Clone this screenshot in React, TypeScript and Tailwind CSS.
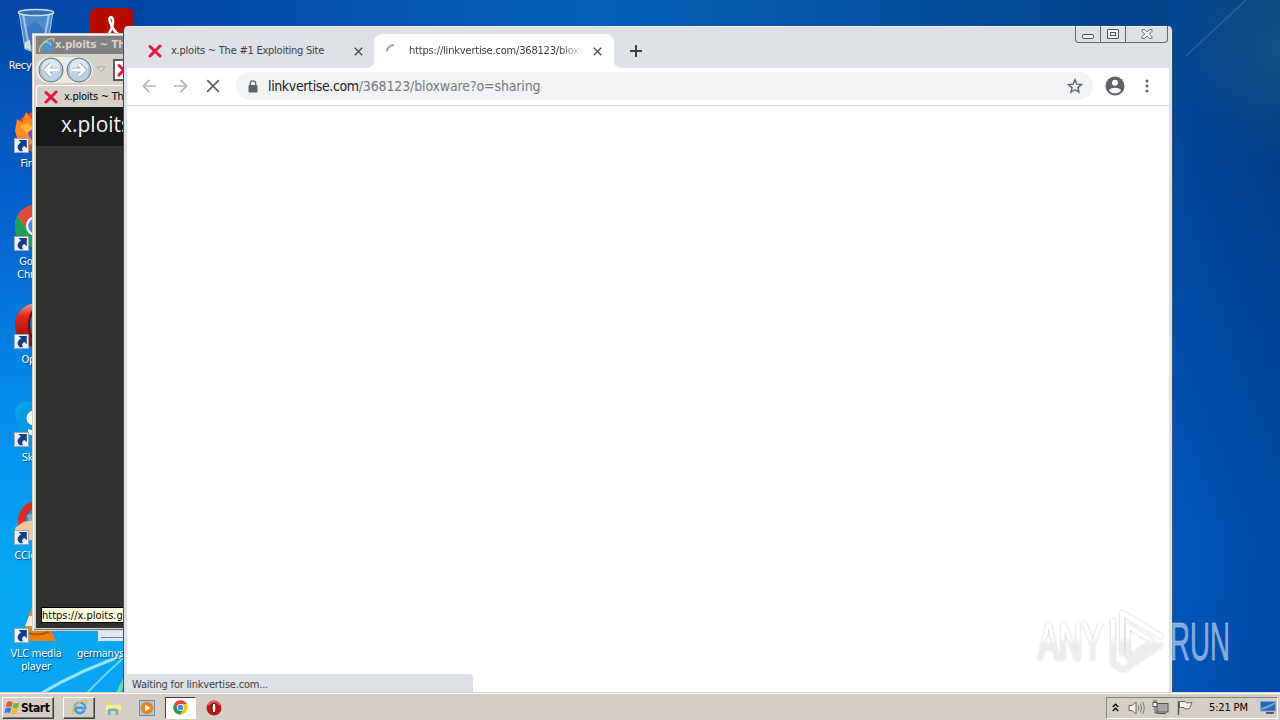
import type { ReactNode } from 'react';

const TAHOMA = "font-['DejaVu_Sans_Condensed','DejaVu_Sans',sans-serif] [font-stretch:condensed]";

function RedX({ size = 14 }: { size?: number }) {
  return (
    <svg width={size} height={size} viewBox="0 0 14 14" className="shrink-0">
      <path d="M2 2.5 L12 12 M12 2 L2 12" stroke="#e4173c" strokeWidth="3" strokeLinecap="round" />
    </svg>
  );
}

function ChromeLogo({ size }: { size: number }) {
  return (
    <svg width={size} height={size} viewBox="0 0 48 48" className="shrink-0">
      <circle cx="24" cy="24" r="23" fill="#f9c51d" />
      <path d="M4 12.5 A23 23 0 0 1 44 12.5 L24 13 L14.5 29.5 Z" fill="#dd4b3e" />
      <path d="M4 12.5 L14.5 29.5 L33.5 29.5 L23 47 A23 23 0 0 1 4 12.5 Z" fill="#1f9d58" />
      <circle cx="24" cy="24" r="11" fill="#fff" />
      <circle cx="24" cy="24" r="8.5" fill="#4587f3" />
    </svg>
  );
}

function IELogo({ size }: { size: number }) {
  return (
    <svg width={size} height={size} viewBox="0 0 20 20" className="shrink-0">
      <path d="M16 13 A6 6 0 1 1 16.5 10.5 L6 10.5" fill="none" stroke="#3d9be0" strokeWidth="3.2" />
      <path d="M15.5 10 A5.6 5.6 0 0 0 6 8" fill="none" stroke="#a5dcf7" strokeWidth="1.2" />
      <path d="M2.5 18 C-1 16 5 6 12 3 C17 .5 20 1.500 17.800 5.500" fill="none" stroke="#e6c14f" strokeWidth="1.7" />
    </svg>
  );
}

function ShortcutArrow() {
  return (
    <svg width="15" height="15" viewBox="0 0 15 15" className="absolute bottom-px left-[0.5px]">
      <rect x=".5" y=".5" width="14" height="14" fill="#e9f4fc" stroke="#9baab5" />
      <path d="M4.500 2 H12.800 V10.300 L10.400 8 C7.800 9 7.600 11 9 13.200 H6 C2 10 3.500 6.500 7 4.500 Z" fill="#153e86" />
    </svg>
  );
}

function DesktopIcon({ place, label, shortcut, children }: { place: string; label: ReactNode; shortcut?: boolean; children: ReactNode }) {
  return (
    <div className={`absolute flex w-[96px] flex-col items-center ${place}`}>
      <div className="relative h-12 w-[46px]">
        {children}
        {shortcut && <ShortcutArrow />}
      </div>
      <div className="mt-[3px] text-center text-[11px] leading-[13px] tracking-[-0.25px] text-white [text-shadow:1px_1px_1px_#003b7a]">{label}</div>
    </div>
  );
}

function Desktop() {
  return (
    <>
      <svg className="absolute inset-0" width="1280" height="720" viewBox="0 0 1280 720">
        <defs>
          <linearGradient id="left" x1="0" y1="0" x2="0" y2="1">
            <stop offset="0" stopColor="#0346a5" />
            <stop offset=".28" stopColor="#0560cc" />
            <stop offset=".55" stopColor="#058aea" />
            <stop offset=".8" stopColor="#06a8f5" />
            <stop offset="1" stopColor="#0ba4f2" />
          </linearGradient>
          <linearGradient id="right" x1="0" y1="0" x2="0" y2="1">
            <stop offset="0" stopColor="#07427f" />
            <stop offset=".22" stopColor="#02418c" />
            <stop offset=".5" stopColor="#004ba7" />
            <stop offset=".75" stopColor="#0055bb" />
            <stop offset="1" stopColor="#0052b5" />
          </linearGradient>
          <linearGradient id="shade" x1="0" y1="0" x2="1" y2="0">
            <stop offset="0" stopColor="#0058c4" stopOpacity=".3" />
            <stop offset="1" stopColor="#003678" stopOpacity=".3" />
          </linearGradient>
          <linearGradient id="top" x1="0" y1="0" x2="1" y2="0">
            <stop offset="0" stopColor="#0346a5" />
            <stop offset=".45" stopColor="#0560b8" />
            <stop offset="1" stopColor="#034288" />
          </linearGradient>
          <radialGradient id="corner" gradientUnits="userSpaceOnUse" cx="1285" cy="50" r="110">
            <stop offset="0" stopColor="#1a558a" stopOpacity=".8" />
            <stop offset="1" stopColor="#1a558a" stopOpacity="0" />
          </radialGradient>
        </defs>
        <rect width="130" height="720" fill="url(#left)" />
        <rect x="124" width="1050" height="40" fill="url(#top)" />
        <rect x="1168" width="112" height="720" fill="url(#right)" />
        <rect x="1168" width="112" height="720" fill="url(#shade)" />
        <rect x="1160" width="120" height="170" fill="url(#corner)" />
        <path d="M1186 56 L1246 0" stroke="#4f82b6" strokeOpacity=".4" strokeWidth="1.5" />
        <path d="M40 694 Q80 670 130 653" fill="none" stroke="#b9f4fb" strokeWidth="3" strokeOpacity=".8" />
        <path d="M86 694 Q105 674 130 652" fill="none" stroke="#7ce4f7" strokeWidth="2" strokeOpacity=".8" />
        <path d="M118 694 Q122 684 130 670" fill="none" stroke="#6be0ae" strokeWidth="4" />
      </svg>

      <DesktopIcon place="left-[-12px] top-[8px]" label="Recycle Bin">
        <svg width="46" height="48" viewBox="0 0 46 48">
          <path d="M6 4 L12 41 Q23 46 34 41 L40 4 Z" fill="#6aa3d8" fillOpacity=".75" stroke="#a9cbea" />
          <path d="M13 20 L22 13 L31 21 L34 37 L15 37 Z" fill="#2e71bb" fillOpacity=".7" />
          <path d="M10 6 L16 39 M36 6 L30 39" stroke="#d3e5f5" strokeOpacity=".65" strokeWidth="2" />
          <path d="M12 34 L17 32 L18 42 L12 40 Z" fill="#ddd" />
          <ellipse cx="23" cy="4.500" rx="17.500" ry="3" fill="#336fb3" stroke="#cbdeed" strokeWidth="1.500" />
        </svg>
      </DesktopIcon>
      <DesktopIcon place="left-[64px] top-[8px]" label="Acrobat">
        <svg width="46" height="48" viewBox="0 0 46 48">
          <rect x="1" width="44" height="44" rx="7" fill="#b60c00" />
          <path d="M12 36 C19 29 25 18 24 12 C23 7 19 9 21 14 C24 23 30 29 36 28 C30 24 17 28 12 36" fill="none" stroke="#fff" strokeWidth="2.500" />
        </svg>
      </DesktopIcon>
      <DesktopIcon place="left-[-12px] top-[106px]" label="Firefox" shortcut>
        <svg width="46" height="48" viewBox="0 0 46 48">
          <circle cx="23" cy="26" r="20" fill="#f4452f" />
          <path d="M2 25 L4 13 L9 17 L13 6 L19 14 L31 12 C23 17 34 32 22 38 C14 37 8 45 2 25" fill="#ff8a24" />
          <circle cx="25" cy="26" r="10" fill="#7648c4" />
          <path d="M7 20 Q16 14 21 22 L14 27" fill="#ffb52e" />
        </svg>
      </DesktopIcon>
      <DesktopIcon place="left-[-12px] top-[204px]" label={<>Google<br />Chrome</>} shortcut>
        <div className="pl-px"><ChromeLogo size={44} /></div>
      </DesktopIcon>
      <DesktopIcon place="left-[-12px] top-[302px]" label="Opera" shortcut>
        <svg width="46" height="48" viewBox="0 0 46 48">
          <defs>
            <linearGradient id="opera" x1="0" y1="0" x2="0" y2="1">
              <stop offset="0" stopColor="#f19a94" />
              <stop offset=".3" stopColor="#e2281e" />
              <stop offset="1" stopColor="#8c0709" />
            </linearGradient>
          </defs>
          <ellipse cx="24" cy="23" rx="22" ry="22" fill="url(#opera)" />
          <ellipse cx="25" cy="23" rx="9" ry="17" fill="#0f84d6" stroke="#780406" strokeWidth="2" />
        </svg>
      </DesktopIcon>
      <DesktopIcon place="left-[-12px] top-[400px]" label="Skype" shortcut>
        <svg width="46" height="48" viewBox="0 0 46 48">
          <circle cx="14" cy="13" r="12" fill="#05a2e6" />
          <circle cx="24" cy="23" r="20" fill="#0799df" />
          <circle cx="21" cy="18" r="7.500" fill="#fff" />
          <path d="M15 29 Q21 32 27 28 L27 35 Q18 37 15 33 Z" fill="#fff" />
        </svg>
      </DesktopIcon>
      <DesktopIcon place="left-[-12px] top-[498px]" label="CCleaner" shortcut>
        <svg width="46" height="48" viewBox="0 0 46 48">
          <path d="M35 10 A16 16 0 1 0 35 35" fill="none" stroke="#d72e24" strokeWidth="8" />
          <path d="M2 30 L10 24 L21 22 L32 40 L5 44 Z" fill="#f4c69b" />
          <path d="M14 17 L24 15 L24 23 L16 23 Z" fill="#8ba8bd" />
        </svg>
      </DesktopIcon>
      <DesktopIcon place="left-[-12px] top-[596px]" label={<>VLC media<br />player</>} shortcut>
        <svg width="46" height="48" viewBox="0 0 46 48">
          <path d="M22 2 L27 2 L36 37 H10 Z" fill="#f78b17" />
          <path d="M16 20 L32 20 L35 30 L12 30 Z" fill="#f2eee8" />
          <path d="M8 34 H38 L43 45 H3 Z" fill="#ee8012" />
          <path d="M12 36 Q23 41 36 36" fill="none" stroke="#b65608" strokeWidth="2" />
        </svg>
      </DesktopIcon>
      <DesktopIcon place="left-[64px] top-[596px]" label="germanyseries">
        <div className="ml-[9px] h-[45px] w-7 bg-linear-to-b from-white to-[#dbe6fa]" />
        <div className="absolute bottom-[6px] left-[12px] h-px w-6 bg-[#6b85c2]" />
      </DesktopIcon>
    </>
  );
}

function NavButton({ flip }: { flip?: boolean }) {
  return (
    <svg width="28" height="26" viewBox="0 0 28 26" className={flip ? 'shrink-0 -scale-x-100' : 'shrink-0'}>
      <circle cx="14" cy="13" r="12" fill="#a9bfd0" stroke="#697784" />
      <circle cx="14" cy="11.500" r="9.500" fill="#dbe7f0" />
      <path d="M4 14 Q14 19 24 14 Q22 24 14 24 Q6 24 4 14" fill="#bcd2e2" />
      <path d="M21 13 H9 M14 7.500 L8.500 13 L14 18.500" fill="none" stroke="#8da8bb" strokeWidth="4.600" />
      <path d="M21 13 H9 M14 7.500 L8.500 13 L14 18.500" fill="none" stroke="#fff" strokeWidth="3" />
    </svg>
  );
}

// Only the strip left of the Chrome window is visible, so it is kept that narrow.
function ExplorerWindow() {
  return (
    <div className="absolute left-[32px] top-[33px] flex h-[598px] w-[92px] flex-col overflow-hidden border border-r-0 border-[#d4d0c8] bg-[#d5d0c9] pb-[2px] pl-[3px] pt-[2px] shadow-[inset_1px_1px_0_#fff,inset_0_-1px_0_#777]">
      <div className="flex h-[18px] shrink-0 items-center bg-[#828282] pl-[2px] text-[#d8d4ce]">
        <IELogo size={17} />
        <span className="whitespace-nowrap text-[11px] font-bold">x.ploits ~ The</span>
      </div>
      <div className="flex h-[31px] shrink-0 items-center">
        <div className="flex shrink-0 rounded-full bg-[#eceae5] pl-px">
          <NavButton />
          <NavButton flip />
        </div>
        <svg width="10" height="7" viewBox="0 0 10 7" className="ml-[3px] shrink-0"><path d="M1 1 H9 L5 5.500 Z" fill="#e8e6e2" stroke="#a6a19b" /></svg>
        <div className="ml-[7px] flex h-[22px] w-[60px] shrink-0 items-center border-2 border-[#5f5d59] bg-white pl-[2px]"><RedX /></div>
      </div>
      <div className="flex h-[22px] shrink-0 items-center rounded-tl-[3px] border-l border-t border-white pl-[7px] text-[11px] text-black">
        <RedX />
        <span className="ml-[6px] whitespace-nowrap pt-px tracking-[-0.25px]">x.ploits ~ The</span>
      </div>
      <div className="flex h-[39px] shrink-0 items-center bg-[#171918] pl-[25px] font-['Open_Sans',sans-serif] text-[21px] leading-none text-[#f2f2f2] [font-stretch:normal]">
        <span className="pb-[4px]">x.ploits</span>
      </div>
      <div className="flex grow items-end bg-[#313131] pb-[5px] pl-[5px]">
        <div className="h-[16px] w-full border border-r-0 border-black bg-[#ffffe1] text-[11px] leading-[15px] text-black">https://x.ploits.gg</div>
      </div>
    </div>
  );
}

function Cross({ size, color = '#45494d', width = 1.8 }: { size: number; color?: string; width?: number }) {
  return (
    <svg width={size} height={size} viewBox="0 0 12 12" preserveAspectRatio="none">
      <path d="M1 1 L11 11 M11 1 L1 11" stroke={color} strokeWidth={width} />
    </svg>
  );
}

function ChromeWindow() {
  return (
    <div className="absolute left-[123px] top-[26px] flex h-[666px] w-[1050px] flex-col overflow-hidden rounded-t-[5px] border-x border-[#38516b] bg-[#dee1e6] shadow-[inset_0_1px_0_#eef1f6]">
      {/* Tab strip */}
      <div className="flex h-[42px] shrink-0 pl-[24px]">
        <div className="flex w-[226px] items-center pt-[8px] text-[11px] text-[#3c4043]">
          <RedX />
          <span className="ml-[9px] w-[183px] whitespace-nowrap pt-px tracking-[-0.24px]">x.ploits ~ The #1 Exploiting Site</span>
          <Cross size={9} />
        </div>
        <div className="relative mt-[8px] flex w-[240px] items-center rounded-t-[8px] bg-white pl-[12px] text-[11px] text-[#3c4043]">
          <svg width="14" height="14" viewBox="0 0 14 14" className="shrink-0"><path d="M1 7.500 A6.500 6.500 0 0 1 8 1.200" fill="none" stroke="#999" strokeWidth="1.800" /></svg>
          <span className="ml-[9px] w-[175px] overflow-hidden whitespace-nowrap pt-px tracking-[-0.18px] [mask-image:linear-gradient(to_right,black_86%,transparent)]">https://linkvertise.com/368123/bloxware</span>
          <span className="ml-[9px]"><Cross size={9} /></span>
          <svg width="8" height="8" className="absolute -left-2 bottom-0"><path d="M0 8 Q8 8 8 0 V8 Z" fill="#fff" /></svg>
          <svg width="8" height="8" className="absolute -right-2 bottom-0"><path d="M8 8 Q0 8 0 0 V8 Z" fill="#fff" /></svg>
        </div>
        <svg width="12" height="12" viewBox="0 0 12 12" className="ml-[16px] mt-[19px]"><path d="M6 0 V12 M0 6 H12" stroke="#3c4043" strokeWidth="2" /></svg>
        <div className="ml-auto mr-[4px] flex h-[17px] w-[93px] rounded-b-[4px] border border-t-0 border-[#62676f]">
          <div className="flex w-[25px] items-center justify-center border-r border-[#62676f] pt-[4px]">
            <div className="h-[5px] w-[12px] rounded-[2px] border border-[#4b5059] bg-white" />
          </div>
          <div className="flex w-[25px] items-center justify-center border-r border-[#62676f]">
            <div className="flex h-[10px] w-[12px] items-center justify-center rounded-[1px] border border-[#4b5059] bg-[#f4f5f7]"><div className="h-[4px] w-[6px] border border-[#4b5059]" /></div>
          </div>
          <div className="flex grow items-center justify-center">
            <svg width="12" height="10" viewBox="0 0 13 11">
              <path d="M1 .7 H4 L6.500 3.200 L9 .7 H12 V2.500 L9 5.500 L12 8.500 V10.300 H9 L6.500 7.800 L4 10.300 H1 V8.500 L4 5.500 L1 2.500 Z" fill="#f7f7f8" stroke="#4b5059" strokeWidth=".9" />
            </svg>
          </div>
        </div>
      </div>

      <div className="mx-[3px] flex min-h-0 grow flex-col bg-white">
        {/* Toolbar */}
        <div className="flex h-[38px] shrink-0 items-center border-b border-[#dcdee1] pb-px pl-[15px]">
          <svg width="14" height="14" viewBox="0 0 14 14"><path d="M14 7 H1.500 M7.500 .8 L1.300 7 L7.500 13.200" fill="none" stroke="#b5b7b9" strokeWidth="1.700" /></svg>
          <svg width="14" height="14" viewBox="0 0 14 14" className="ml-[18px]"><path d="M0 7 H12.500 M6.500 .8 L12.700 7 L6.500 13.200" fill="none" stroke="#b5b7b9" strokeWidth="1.700" /></svg>
          <span className="ml-[18px]"><Cross size={14} color="#5f6368" width={1.5} /></span>
          <div className="ml-[16px] flex h-[28px] w-[857px] items-center rounded-full bg-[#f1f3f4] pl-[12px] pr-[10px]">
            <svg width="10" height="13" viewBox="0 0 10 13"><path d="M2.300 5.500 V3.500 A2.700 2.700 0 0 1 7.700 3.500 V5.500" fill="none" stroke="#5f6368" strokeWidth="1.300" /><rect x=".5" y="5" width="9" height="7.500" rx="1" fill="#5f6368" /></svg>
            <span className="ml-[10px] grow whitespace-nowrap text-[14px] tracking-[-0.14px] text-[#74797e]"><span className="tracking-[-0.37px] text-[#202124]">linkvertise.com</span>/368123/bloxware?o=sharing</span>
            <svg width="16" height="16" viewBox="0 0 24 24"><path d="M12 2.700 L14.700 9.200 L21.700 9.800 L16.400 14.400 L18 21.200 L12 17.600 L6 21.200 L7.600 14.400 L2.300 9.800 L9.300 9.200 Z" fill="none" stroke="#5f6368" strokeWidth="2.100" /></svg>
          </div>
          <svg width="20" height="20" viewBox="0 0 20 20" className="ml-[12px]">
            <circle cx="10" cy="10" r="9.500" fill="#5f6368" />
            <circle cx="10" cy="6.800" r="3" fill="#fff" />
            <path d="M4 14.500 C5 10.700 15 10.700 16 14.500 C13 18.300 7 18.300 4 14.500" fill="#fff" />
          </svg>
          <svg width="4" height="14" viewBox="0 0 4 14" className="ml-[20px]"><g fill="#5f6368"><circle cx="2" cy="2" r="1.500" /><circle cx="2" cy="7" r="1.500" /><circle cx="2" cy="12" r="1.500" /></g></svg>
        </div>

        {/* Page, still loading */}
        <div className="flex grow items-end">
          <div className="h-[18px] w-[346px] rounded-tr-[4px] bg-[#dee1e6] pl-[5px] pt-[4px] text-[11px] leading-[13px] tracking-[-0.2px] text-[#3c4043]">Waiting for linkvertise.com...</div>
        </div>
      </div>
    </div>
  );
}

function Taskbar() {
  return (
    <div className="absolute inset-x-0 bottom-0 flex h-[28px] items-center border-t border-[#d4d0c8] bg-[#d5cec7] pl-[2px] text-black shadow-[inset_0_1px_0_#fff]">
      <div className="mt-[2px] flex h-[22px] w-[52px] items-center border border-b-[#404040] border-l-white border-r-[#404040] border-t-white pl-[1px] shadow-[inset_-1px_-1px_0_#808080]">
        <svg width="17" height="16" viewBox="0 0 17 16">
          <path d="M3 2 Q6 .5 8.500 2 L7.500 7 Q5 5.800 1.800 7 Z" fill="#e9552a" />
          <path d="M9.500 2.500 Q12 4 15.500 2.500 L14 8 Q11 9 8.500 7.500 Z" fill="#79b832" />
          <path d="M1.500 8 Q4.500 6.800 7.300 8 L6 13 Q3.500 12 .5 13 Z" fill="#3c7ccf" />
          <path d="M8.300 8.500 Q11 10 13.800 9 L12.500 14 Q9.500 15 7 13.500 Z" fill="#f5bd25" />
        </svg>
        <span className="text-[12px] font-bold tracking-[-0.45px]">Start</span>
      </div>
      <div className="ml-[9px] mt-[2px] flex h-[22px] w-[32px] items-center justify-center border border-b-[#404040] border-l-white border-r-[#404040] border-t-white shadow-[inset_-1px_-1px_0_#808080]">
        <IELogo size={17} />
      </div>
      <svg width="18" height="17" viewBox="0 0 18 17" className="ml-[9px] mt-[2px]">
        <path d="M1 3 H7 L8.500 5 H16 V15 H1 Z" fill="#ecd27b" />
        <path d="M2 6 H17 V11 H2 Z" fill="#fae9a9" />
        <path d="M4 16 V11 Q4 9.500 6 9.500 H12 Q14 9.500 14 11 V16 H11.500 V12 H6.500 V16 Z" fill="#63b2d4" />
      </svg>
      <svg width="16" height="16" viewBox="0 0 16 16" className="ml-[17px] mt-[2px]">
        <rect x=".5" y=".5" width="15" height="15" fill="#a9c9e6" stroke="#638db5" />
        <circle cx="8" cy="8" r="6.200" fill="#f0850f" />
        <path d="M6 4.500 L11.500 8 L6 11.500 Z" fill="#fff" />
      </svg>
      <div className="ml-[10px] mt-[2px] flex h-[22px] w-[31px] items-center justify-center border border-b-white border-l-[#404040] border-r-white border-t-[#404040] bg-white">
        <ChromeLogo size={15} />
      </div>
      <svg width="16" height="16" viewBox="0 0 16 16" className="ml-[10px] mt-[2px]">
        <circle cx="8" cy="8" r="7.500" fill="#bd1818" />
        <path d="M2 5 Q8 -2 14 5" fill="none" stroke="#dc6e6b" strokeWidth="1.500" />
        <ellipse cx="8" cy="8" rx="2" ry="4.800" fill="#fff" stroke="#700b0d" />
      </svg>
      <div className="ml-auto mr-[2px] mt-[2px] flex h-[22px] w-[172px] items-center border border-b-white border-l-[#808080] border-r-white border-t-[#808080] pl-[5px]">
        <svg width="7" height="9" viewBox="0 0 7 9"><path d="M.7 4 L3.500 1.200 L6.300 4 M.7 8 L3.500 5.200 L6.300 8" fill="none" stroke="#000" strokeWidth="1.300" /></svg>
        <svg width="17" height="14" viewBox="0 0 17 14" className="ml-[9px]"><path d="M1 4.500 H4 L8 1 V13 L4 9.500 H1 Z" fill="#f5f5f3" stroke="#666" /><path d="M10 4.500 Q12 7 10 9.500 M12.300 2.500 Q15 7 12.300 11.500 M14.500 1 Q18 7 14.500 13" fill="none" stroke="#777" /></svg>
        <svg width="17" height="15" viewBox="0 0 17 15" className="ml-[7px]"><rect x="5" y="3.500" width="11" height="8.500" fill="#a8a6a3" stroke="#555" /><path d="M6 13.500 H14" stroke="#555" /><rect x="1" y="2.500" width="4" height="4" fill="#fff" stroke="#555" /><path d="M2 0 V3 M4 0 V3 M3 6.500 V13 H7" fill="none" stroke="#555" /></svg>
        <svg width="16" height="15" viewBox="0 0 16 15" className="ml-[8px]"><path d="M1.500 1 V15" stroke="#555" strokeWidth="1.500" /><path d="M2.500 1.500 H8 L9.500 3 L15 2.500 L12.500 8.500 L8 9 L7 7.500 H2.500 Z" fill="#f8f8f7" stroke="#666" /></svg>
        <span className="ml-[16px] whitespace-nowrap pt-px text-[11px] tracking-[-0.15px]">5:21 PM</span>
        <svg width="16" height="13" viewBox="0 0 16 13" className="ml-auto mr-[1px]"><path d="M.5 .5 H15.500 V10 H.5 Z" fill="#2864b6" stroke="#82a0c5" /><path d="M1 7 Q7 5 15 1 V3 Q8 8 1 9 Z" fill="#5ca7dc" /><path d="M6 12 H14" stroke="#263650" strokeWidth="1.500" /></svg>
      </div>
    </div>
  );
}

function Watermark() {
  return (
    <svg className="pointer-events-none absolute left-[1030px] top-[602px]" width="210" height="78" viewBox="0 0 210 78">
      <defs>
        <filter id="soft" x="-10%" y="-10%" width="120%" height="120%"><feDropShadow dx="0" dy="0" stdDeviation="1.800" floodColor="#000" floodOpacity=".38" /></filter>
        <linearGradient id="mark" gradientUnits="userSpaceOnUse" x1="0" y1="35" x2="0" y2="42"><stop offset="0" stopColor="#fff" /><stop offset="1" stopColor="#e2e2e2" /></linearGradient>
      </defs>
      <g filter="url(#soft)" opacity=".65" className="font-['Liberation_Sans_Narrow','Liberation_Sans',sans-serif]" fontSize="53">
        <text x="8" y="58" textLength="65" lengthAdjust="spacingAndGlyphs" fill="url(#mark)" stroke="url(#mark)" strokeWidth=".6">ANY</text>
        <g fill="none" stroke="url(#mark)" strokeWidth="4" strokeLinejoin="round">
          <path d="M83 17 V62 L93 68 L132 42" />
          <path d="M92 53 V11 L132 35" />
          <path d="M98 24 V56 L123 40 Z" />
        </g>
      </g>
      <text x="140" y="58" textLength="60" lengthAdjust="spacingAndGlyphs" fontSize="53" fill="#fff" fillOpacity=".5" stroke="#fff" strokeOpacity=".35" strokeWidth=".8" className="font-['Liberation_Sans_Narrow','Liberation_Sans',sans-serif]">RUN</text>
    </svg>
  );
}

export default function App() {
  return (
    <div className={`relative h-[720px] w-[1280px] overflow-hidden bg-[#0560cc] ${TAHOMA}`}>
      <Desktop />
      <ExplorerWindow />
      <ChromeWindow />
      <Taskbar />
      <Watermark />
    </div>
  );
}
